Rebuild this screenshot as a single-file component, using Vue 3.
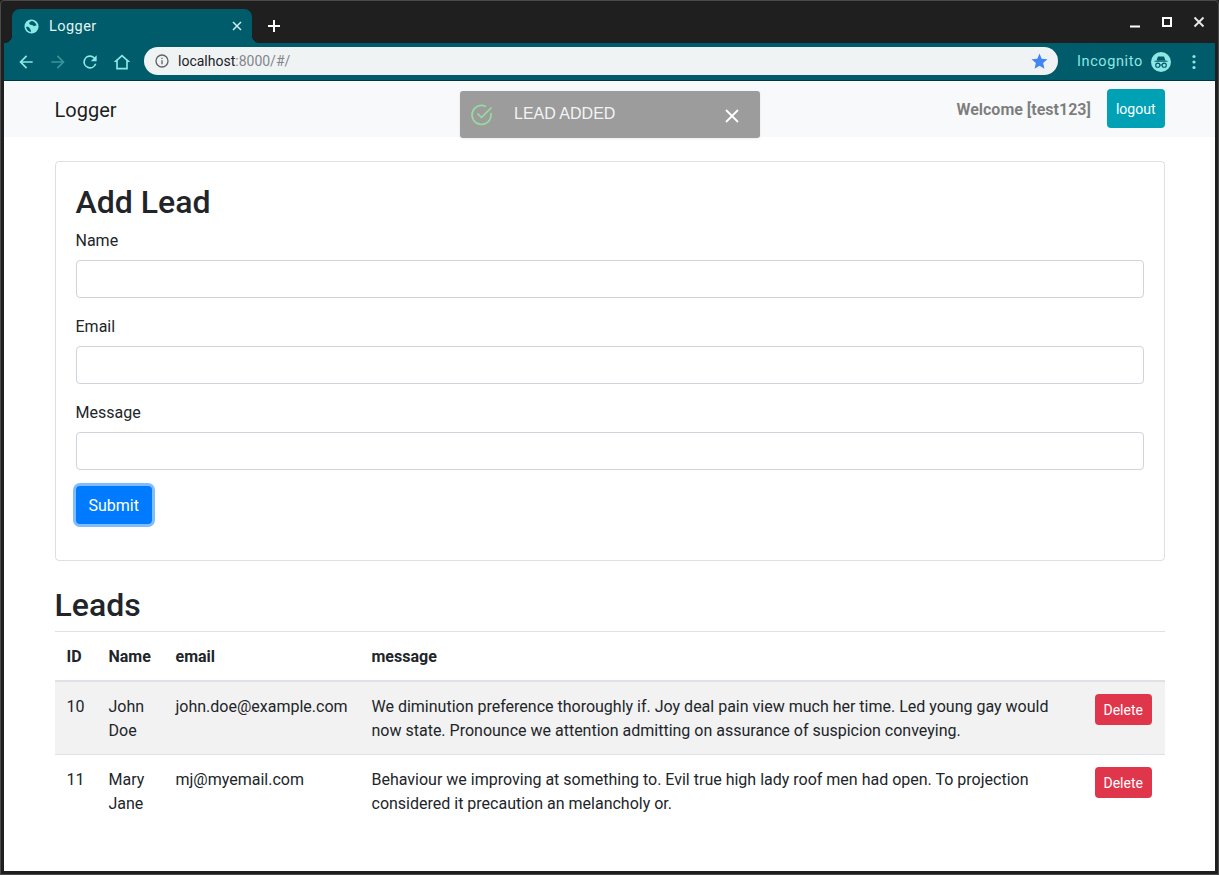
<template>
  <div class="window">
    <div class="titlebar">
      <div class="tab">
        <svg class="tab-globe" viewBox="0 0 16 16" width="15" height="15">
          <circle cx="8" cy="8" r="7.5" fill="#8ce8e4" />
          <path fill="#005c6b" d="M8.5 2.2C6.5 2.6 4.8 4 6 5.6 7 6.9 9.4 6 10.4 7.6L13.4 6.6C12.6 4.4 10.8 2.7 8.5 2.2zM2.2 8.4C3.8 8 5.6 8.4 6.2 10 6.7 11.4 7.8 11.8 7.4 13.8 4.8 13.5 2.6 11.2 2.2 8.4z" />
        </svg>
        <span class="tab-title">Logger</span>
        <svg class="tab-close" viewBox="0 0 10 10" width="10" height="10">
          <path d="M1 1l8 8M9 1L1 9" stroke="#cfeeee" stroke-width="1.5" fill="none" />
        </svg>
      </div>
      <svg class="new-tab" viewBox="0 0 12 12" width="12" height="12">
        <path d="M6 0v12M0 6h12" stroke="#fff" stroke-width="2" fill="none" />
      </svg>
      <div class="win-controls">
        <svg viewBox="0 0 12 12" width="12" height="12"><path d="M1 10.5h10" stroke="#fff" stroke-width="2" /></svg>
        <svg viewBox="0 0 12 12" width="12" height="12"><rect x="2" y="2" width="8" height="8" stroke="#fff" stroke-width="2" fill="none" /></svg>
        <svg viewBox="0 0 12 12" width="12" height="12"><path d="M1.5 1.5l9 9M10.5 1.5l-9 9" stroke="#e8e8e8" stroke-width="1.9" fill="none" /></svg>
      </div>
    </div>

    <div class="toolbar">
      <svg class="tool" viewBox="0 0 24 24" width="20" height="20"><path fill="#8ce8e4" d="M20 11H7.8l5.6-5.6L12 4l-8 8 8 8 1.4-1.4L7.8 13H20z" /></svg>
      <svg class="tool dim" viewBox="0 0 24 24" width="20" height="20"><path fill="#8ce8e4" d="M4 11h12.2l-5.6-5.6L12 4l8 8-8 8-1.4-1.4 5.6-5.6H4z" /></svg>
      <svg class="tool" viewBox="0 0 24 24" width="20" height="20"><path fill="#8ce8e4" d="M17.65 6.35A8 8 0 1 0 19.73 14h-2.08A6 6 0 1 1 12 6c1.66 0 3.14.69 4.22 1.78L13 11h7V4z" /></svg>
      <svg class="tool" viewBox="0 0 24 24" width="20" height="20"><path fill="#8ce8e4" d="M12 3L2 12h3v9h14v-9h3zm5 16H7v-8.8l5-4.5 5 4.5z" /></svg>
      <div class="omnibox">
        <svg viewBox="0 0 24 24" width="16" height="16"><path fill="#5f6368" d="M11 7h2v2h-2zm0 4h2v6h-2zm1-9a10 10 0 1 0 0 20 10 10 0 0 0 0-20zm0 18a8 8 0 1 1 0-16 8 8 0 0 1 0 16z" /></svg>
        <span class="url"><span class="host">localhost</span>:8000/#/</span>
        <svg class="star" viewBox="0 0 24 24" width="19" height="19"><path fill="#4285f4" d="M12 17.3l6.2 3.7-1.6-7L22 9.2l-7.2-.6L12 2 9.2 8.6 2 9.2 7.4 14l-1.6 7z" /></svg>
      </div>
      <span class="incognito">Incognito</span>
      <svg class="spy" viewBox="0 0 20 20" width="20" height="20">
        <circle cx="10" cy="10" r="10" fill="#8ce8e4" />
        <path d="M5.5 8.5L7 4.5h6l1.5 4z M3.5 8.7h13v1.1h-13z" fill="#00596a" />
        <circle cx="6.8" cy="13.2" r="2.1" fill="none" stroke="#00596a" stroke-width="1.1" />
        <circle cx="13.2" cy="13.2" r="2.1" fill="none" stroke="#00596a" stroke-width="1.1" />
        <path d="M8.9 13h2.2" stroke="#00596a" stroke-width="1.1" />
      </svg>
      <svg class="more" viewBox="0 0 4 16" width="4" height="16">
        <circle cx="2" cy="2.5" r="1.6" fill="#8ce8e4" />
        <circle cx="2" cy="8" r="1.6" fill="#8ce8e4" />
        <circle cx="2" cy="13.5" r="1.6" fill="#8ce8e4" />
      </svg>
    </div>

    <div class="page">
      <nav class="navbar">
        <div class="nav-inner">
          <a class="brand">Logger</a>
          <div class="nav-right">
            <strong class="welcome">Welcome [test123]</strong>
            <button class="btn btn-info">logout</button>
          </div>
        </div>
      </nav>

      <div class="toast">
        <svg viewBox="0 0 24 24" width="24" height="24">
          <path d="M21 10.5V12a9.5 9.5 0 1 1-5.6-8.7" fill="none" stroke="#97dc9f" stroke-width="1.7" stroke-linecap="round" />
          <path d="M8 11l3.5 3.5L21 5" fill="none" stroke="#97dc9f" stroke-width="1.7" stroke-linecap="round" stroke-linejoin="round" />
        </svg>
        <span class="toast-text">LEAD ADDED</span>
        <svg class="toast-close" viewBox="0 0 16 16" width="16" height="16">
          <path d="M2 2l12 12M14 2L2 14" stroke="#fff" stroke-width="1.8" fill="none" />
        </svg>
      </div>

      <main class="container">
        <div class="card">
          <h2>Add Lead</h2>
          <form @submit.prevent>
            <div v-for="field in fields" :key="field" class="form-group">
              <label>{{ field }}</label>
              <input class="form-control" type="text">
            </div>
            <div class="form-group">
              <button class="btn btn-primary" type="submit">Submit</button>
            </div>
          </form>
        </div>

        <h2>Leads</h2>
        <table class="table">
          <thead>
            <tr>
              <th class="col-id">ID</th>
              <th class="col-name">Name</th>
              <th class="col-email">email</th>
              <th>message</th>
              <th class="col-action"></th>
            </tr>
          </thead>
          <tbody>
            <tr v-for="lead in leads" :key="lead.id">
              <td>{{ lead.id }}</td>
              <td>{{ lead.name }}</td>
              <td>{{ lead.email }}</td>
              <td>{{ lead.message }}</td>
              <td><button class="btn btn-danger">Delete</button></td>
            </tr>
          </tbody>
        </table>
      </main>
    </div>
  </div>
</template>

<script setup>
const fields = ['Name', 'Email', 'Message']

const leads = [
  {
    id: 10,
    name: 'John Doe',
    email: 'john.doe@example.com',
    message: 'We diminution preference thoroughly if. Joy deal pain view much her time. Led young gay would now state. Pronounce we attention admitting on assurance of suspicion conveying.'
  },
  {
    id: 11,
    name: 'Mary Jane',
    email: 'mj@myemail.com',
    message: 'Behaviour we improving at something to. Evil true high lady roof men had open. To projection considered it precaution an melancholy or.'
  }
]
</script>

<style>
html, body {
  margin: 0;
  background: #1f1f1f;
  overflow: hidden;
}
</style>

<style scoped>
.window {
  width: 1219px;
  height: 875px;
  box-sizing: border-box;
  display: flex;
  flex-direction: column;
  padding: 0 3px 3px;
  background: #1f1f1f;
  border: 1px solid #4a4a4a;
  border-radius: 4px 4px 0 0;
  font-family: Roboto, "Liberation Sans", sans-serif;
  overflow: hidden;
}

.titlebar {
  height: 42px;
  flex: none;
  display: flex;
  align-items: flex-end;
  padding-left: 8px;
  background: #1f1f1f;
}

.tab {
  position: relative;
  width: 240px;
  height: 34px;
  box-sizing: border-box;
  display: flex;
  align-items: center;
  padding: 0 10px 0 12px;
  background: #005c6b;
  border-radius: 8px 8px 0 0;
}

.tab::before,
.tab::after {
  content: "";
  position: absolute;
  bottom: 0;
  width: 8px;
  height: 8px;
}

.tab::before {
  left: -8px;
  background: radial-gradient(circle at 0 0, #1f1f1f 8px, #005c6b 8.5px);
}

.tab::after {
  right: -8px;
  background: radial-gradient(circle at 100% 0, #1f1f1f 8px, #005c6b 8.5px);
}

.tab-title {
  margin-left: 10px;
  flex: 1;
  font-size: 14.5px;
  letter-spacing: 0.45px;
  color: #e3f5f5;
}

.new-tab {
  margin: 0 0 11px 16px;
}

.win-controls {
  margin: 15px 10px 0 auto;
  display: flex;
  align-self: flex-start;
  gap: 20px;
}

.toolbar {
  height: 38px;
  flex: none;
  box-sizing: border-box;
  display: flex;
  align-items: center;
  background: #005c6b;
  border-bottom: 1px solid #00363f;
  padding: 0 0 0 12px;
}

.tool {
  margin-right: 12px;
}

.tool.dim {
  opacity: 0.4;
}

.omnibox {
  width: 914px;
  height: 28px;
  box-sizing: border-box;
  display: flex;
  align-items: center;
  padding: 0 9px 0 10px;
  margin-top: -1px;
  background: #f0f3f4;
  border-radius: 14px;
}

.url {
  margin-left: 8px;
  flex: 1;
  font-size: 14px;
  color: #80868b;
}

.host {
  color: #202124;
}

.incognito {
  margin-left: 19px;
  font-size: 14.5px;
  letter-spacing: 0.6px;
  color: #8ce8e4;
}

.spy {
  margin-left: 8px;
}

.more {
  margin-left: 21px;
}

.page {
  position: relative;
  flex: 1;
  background: #fff;
  overflow: hidden;
}

.navbar {
  height: 56px;
  background: #f8f9fa;
}

.nav-inner,
.container {
  width: 1110px;
  margin: 0 auto;
}

.nav-inner {
  height: 100%;
  display: flex;
  align-items: center;
  justify-content: space-between;
}

.brand {
  padding-top: 2px;
  font-size: 20px;
  color: rgba(0, 0, 0, 0.9);
}

.nav-right {
  display: flex;
  align-items: center;
  gap: 16px;
}

.welcome {
  font-size: 16px;
  color: rgba(0, 0, 0, 0.5);
}

.toast {
  position: absolute;
  left: 456px;
  top: 10px;
  width: 300px;
  height: 47px;
  box-sizing: border-box;
  display: flex;
  align-items: center;
  padding: 0 20px 0 10px;
  background: #9b9c9b;
  border-radius: 3px;
  box-shadow: 0 1px 3px rgba(0, 0, 0, 0.08);
}

.toast-text {
  margin-left: 20px;
  flex: 1;
  margin-top: -2px;
  font-family: "Liberation Sans", sans-serif;
  font-size: 16px;
  color: #f4f4f4;
}

.toast-close {
  margin-top: 2px;
}

.container {
  padding-top: 24px;
}

h2 {
  margin: 0 0 7px;
  padding-top: 1px;
  font-size: 32px;
  font-weight: 500;
  line-height: 1.2;
  color: #212529;
}

.card {
  box-sizing: border-box;
  padding: 20px;
  margin-bottom: 24px;
  border: 1px solid rgba(0, 0, 0, 0.125);
  border-radius: 4px;
}

.form-group {
  margin-bottom: 16px;
}

label {
  display: block;
  margin-bottom: 7px;
  padding-top: 1px;
  font-size: 16px;
  line-height: 24px;
  color: #212529;
}

.form-control {
  display: block;
  width: 100%;
  height: 38px;
  box-sizing: border-box;
  padding: 6px 12px;
  background: #fff;
  border: 1px solid #ced4da;
  border-radius: 4px;
}

.btn {
  height: 38px;
  box-sizing: border-box;
  padding: 7px 12px 5px;
  font-family: inherit;
  font-size: 16px;
  line-height: 24px;
  color: #fff;
  border: 1px solid transparent;
  border-radius: 4px;
}

.btn-info {
  height: 39px;
  padding: 7px 8px 6px;
  margin-bottom: 1px;
  font-size: 14px;
  background: #00a1b5;
}

.btn-primary {
  background: #007bff;
  box-shadow: 0 0 0 3px rgba(0, 123, 255, 0.5);
}

.btn-danger {
  height: 31px;
  padding: 5px 8px 3px;
  margin-top: -1px;
  font-size: 14px;
  line-height: 21px;
  background: #e0364c;
}

.table {
  width: 100%;
  margin-top: -1px;
  table-layout: fixed;
  border-collapse: collapse;
  font-size: 16px;
  line-height: 24px;
  color: #212529;
}

.table th,
.table td {
  padding: 13px 12px 11px;
  text-align: left;
  vertical-align: top;
  border-top: 1px solid #dee2e6;
}

.table th {
  font-weight: 700;
  border-bottom: 2px solid #dee2e6;
}

.table tbody tr:nth-child(odd) {
  background: rgba(0, 0, 0, 0.05);
}

.col-id {
  width: 18px;
}

.col-name {
  width: 43px;
}

.col-email {
  width: 172px;
}

.col-action {
  width: 58px;
}
</style>
